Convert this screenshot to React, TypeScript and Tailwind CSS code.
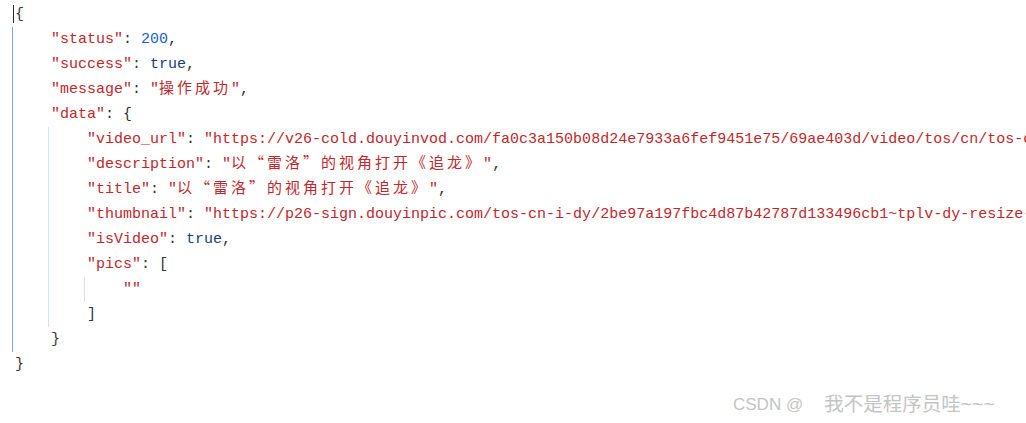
import React from "react";

const KEY = "text-[#c0272d]";
const STR = "text-[#c0272d]";
const NUM = "text-[#1a5fd6]";
const BOOL = "text-[#1c3c73]";
const PUNC = "text-[#333333]";

function Cjk({ children }: { children: React.ReactNode }) {
  return (
    <span className="leading-none tracking-[3px] [font-family:'Noto_Sans_CJK_SC','Liberation_Mono',monospace]">
      {children}
    </span>
  );
}

function Line({ children }: { children: React.ReactNode }) {
  return <div className="h-[25px] leading-[25px] pl-[3px] whitespace-pre">{children}</div>;
}

function Block({
  children,
  guide,
}: {
  children: React.ReactNode;
  guide: string;
}) {
  return <div className={`border-l pl-[35px] ${guide}`}>{children}</div>;
}

function Key({ k }: { k: string }) {
  return (
    <>
      <span className={KEY}>"{k}"</span>
      <span className={PUNC}>: </span>
    </>
  );
}

export default function App() {
  return (
    <div className="relative w-[1026px] h-[423px] overflow-hidden bg-white">
      <div className="pt-[2px] pl-[12px] text-[15px] [font-family:'Liberation_Mono','Noto_Sans_CJK_SC',monospace]">
        <div className="relative h-[25px] leading-[25px] pl-[3px] whitespace-pre">
          <span className="absolute left-[1px] top-[3px] h-[18px] w-px bg-[#222]" />
          <span className={PUNC}>{"{"}</span>
        </div>
        <Block guide="border-[#7ea6e3]">
          <Line>
            <Key k="status" />
            <span className={NUM}>200</span>
            <span className={PUNC}>,</span>
          </Line>
          <Line>
            <Key k="success" />
            <span className={BOOL}>true</span>
            <span className={PUNC}>,</span>
          </Line>
          <Line>
            <Key k="message" />
            <span className={STR}>
              "<Cjk>操作成功</Cjk>"
            </span>
            <span className={PUNC}>,</span>
          </Line>
          <Line>
            <Key k="data" />
            <span className={PUNC}>{"{"}</span>
          </Line>
          <Block guide="border-[#d6e0f4]">
            <Line>
              <Key k="video_url" />
              <span className={STR}>
                "https://v26-cold.douyinvod.com/fa0c3a150b08d24e7933a6fef9451e75/69ae403d/video/tos/cn/tos-cn-ve-15c001-alinc2/ownE9Aj5gAQBAeGfIeAxDhAI9EhQEfDkBnDCgU/"
              </span>
              <span className={PUNC}>,</span>
            </Line>
            <Line>
              <Key k="description" />
              <span className={STR}>
                "<Cjk>以“雷洛”的视角打开《追龙》</Cjk>"
              </span>
              <span className={PUNC}>,</span>
            </Line>
            <Line>
              <Key k="title" />
              <span className={STR}>
                "<Cjk>以“雷洛”的视角打开《追龙》</Cjk>"
              </span>
              <span className={PUNC}>,</span>
            </Line>
            <Line>
              <Key k="thumbnail" />
              <span className={STR}>
                "https://p26-sign.douyinpic.com/tos-cn-i-dy/2be97a197fbc4d87b42787d133496cb1~tplv-dy-resize-origshort-autoq-75:330.jpeg"
              </span>
              <span className={PUNC}>,</span>
            </Line>
            <Line>
              <Key k="isVideo" />
              <span className={BOOL}>true</span>
              <span className={PUNC}>,</span>
            </Line>
            <Line>
              <Key k="pics" />
              <span className={PUNC}>[</span>
            </Line>
            <Block guide="border-[#d6e0f4]">
              <Line>
                <span className={STR}>""</span>
              </Line>
            </Block>
            <Line>
              <span className={PUNC}>]</span>
            </Line>
          </Block>
          <Line>
            <span className={PUNC}>{"}"}</span>
          </Line>
        </Block>
        <Line>
          <span className={PUNC}>{"}"}</span>
        </Line>
      </div>
      <div className="absolute left-[733px] top-[392px] flex items-center text-[17px] text-[#c4c4c4] [font-family:'Liberation_Sans','Noto_Sans_CJK_SC',sans-serif] whitespace-pre">
        <span>CSDN @</span>
        <span className="ml-[21px] text-[19.5px] leading-none">我不是程序员哇~~~</span>
      </div>
    </div>
  );
}
